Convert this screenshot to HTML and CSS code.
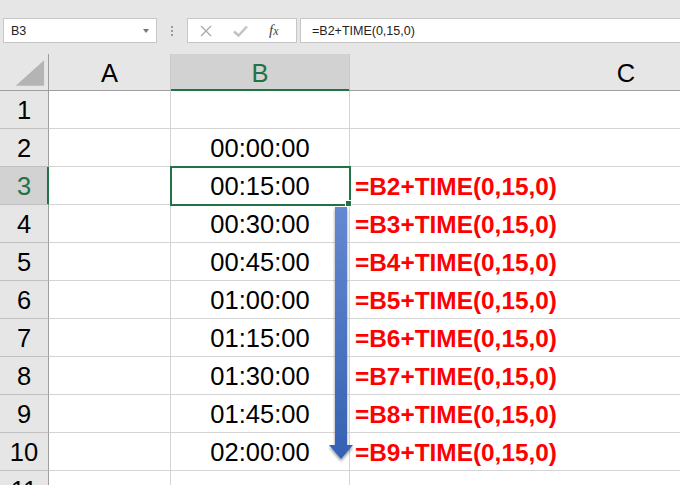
FILE: index.html
```html
<!DOCTYPE html>
<html>
<head>
<meta charset="utf-8">
<link rel="stylesheet" href="styles.css">
</head>
<body>
<div class="app">
  <div class="toolbar">
    <div class="namebox"><span class="ref">B3</span><span class="caret"></span></div>
    <div class="grip"><i></i><i></i><i></i></div>
    <div class="fxbox">
      <svg class="ico" width="14" height="14" viewBox="0 0 14 14"><path d="M2 2 L12 12 M12 2 L2 12" stroke="#a8a8a8" stroke-width="1.3" fill="none"/></svg>
      <svg class="ico" width="17" height="14" viewBox="0 0 17 14"><path d="M2 7.5 L6.5 11.5 L15 2.5" stroke="#c2c2c2" stroke-width="2.4" fill="none"/></svg>
      <span class="fx">f<span class="fxx">x</span></span>
    </div>
    <div class="formula">=B2+TIME(0,15,0)</div>
  </div>
  <div class="grid">
    <div class="hd corner"><svg width="49" height="36" viewBox="0 0 49 36"><polygon points="45,6 45,32 16,32" fill="#b4b4b4"/></svg></div>
    <div class="hd col">A</div>
    <div class="hd col sel">B</div>
    <div class="hd col">C</div>

    <div class="hd row">1</div><div class="c"></div><div class="c"></div><div class="c"></div>
    <div class="hd row">2</div><div class="c"></div><div class="c t">00:00:00</div><div class="c"></div>
    <div class="hd row sel">3</div><div class="c"></div><div class="c t active">00:15:00</div><div class="c f">=B2+TIME(0,15,0)</div>
    <div class="hd row">4</div><div class="c"></div><div class="c t">00:30:00</div><div class="c f">=B3+TIME(0,15,0)</div>
    <div class="hd row">5</div><div class="c"></div><div class="c t">00:45:00</div><div class="c f">=B4+TIME(0,15,0)</div>
    <div class="hd row">6</div><div class="c"></div><div class="c t">01:00:00</div><div class="c f">=B5+TIME(0,15,0)</div>
    <div class="hd row">7</div><div class="c"></div><div class="c t">01:15:00</div><div class="c f">=B6+TIME(0,15,0)</div>
    <div class="hd row">8</div><div class="c"></div><div class="c t">01:30:00</div><div class="c f">=B7+TIME(0,15,0)</div>
    <div class="hd row">9</div><div class="c"></div><div class="c t">01:45:00</div><div class="c f">=B8+TIME(0,15,0)</div>
    <div class="hd row">10</div><div class="c"></div><div class="c t">02:00:00</div><div class="c f">=B9+TIME(0,15,0)</div>
    <div class="hd row">11</div><div class="c"></div><div class="c"></div><div class="c"></div>
  </div>
  <svg class="arrow" width="680" height="485" viewBox="0 0 680 485">
    <defs>
      <linearGradient id="ag" x1="0" y1="0" x2="0" y2="1">
        <stop offset="0" stop-color="#6588d0"/>
        <stop offset="1" stop-color="#3561b3"/>
      </linearGradient>
      <filter id="sh" x="-1" y="-0.1" width="3" height="1.2">
        <feGaussianBlur in="SourceAlpha" stdDeviation="1.6"/>
        <feOffset dx="0" dy="1.5" result="b"/>
        <feComponentTransfer><feFuncA type="linear" slope="0.45"/></feComponentTransfer>
        <feMerge><feMergeNode/><feMergeNode in="SourceGraphic"/></feMerge>
      </filter>
    </defs>
    <path d="M335 207 H347 V445 H353 L341 459 L329 445 H335 Z" fill="url(#ag)" filter="url(#sh)"/>
  </svg>
</div>
</body>
</html>
```

FILE: styles.css
```css
html, body {
  margin: 0;
  padding: 0;
  background: #ffffff;
}

.app {
  position: relative;
  width: 680px;
  height: 485px;
  overflow: hidden;
  font-family: "Liberation Sans", Arial, sans-serif;
}

.toolbar {
  height: 54px;
  box-sizing: border-box;
  padding-top: 18px;
  background: #e6e6e6;
  display: flex;
  align-items: flex-start;
}

.namebox {
  margin-left: 3px;
  width: 154px;
  height: 25px;
  box-sizing: border-box;
  border: 1px solid #c6c6c6;
  background: #ffffff;
  display: flex;
  align-items: center;
  justify-content: space-between;
  padding: 0 7px 0 7px;
  font-size: 12.5px;
  color: #222222;
}

.caret {
  width: 0;
  height: 0;
  border-left: 3.5px solid transparent;
  border-right: 3.5px solid transparent;
  border-top: 4px solid #777777;
  margin-top: 1px;
}

.grip {
  width: 30px;
  height: 25px;
  display: flex;
  flex-direction: column;
  align-items: center;
  justify-content: center;
  gap: 2px;
}

.grip i {
  display: block;
  width: 2px;
  height: 2px;
  background: #9a9a9a;
}

.fxbox {
  width: 110px;
  height: 25px;
  box-sizing: border-box;
  border: 1px solid #c6c6c6;
  background: #ffffff;
  display: flex;
  align-items: center;
  padding-left: 11px;
  gap: 19px;
}

.fx {
  font-family: "Liberation Serif", "Times New Roman", serif;
  font-style: italic;
  font-size: 15px;
  color: #444444;
  margin-left: 1px;
}

.fxx {
  font-size: 12px;
}

.formula {
  margin-left: 3px;
  flex: 1;
  height: 25px;
  box-sizing: border-box;
  border: 1px solid #c6c6c6;
  border-right: none;
  background: #ffffff;
  display: flex;
  align-items: center;
  padding-left: 11px;
  font-size: 12.5px;
  color: #222222;
}

.grid {
  display: grid;
  grid-template-columns: 49px 122px 179px 553px;
  grid-template-rows: 37px;
  grid-auto-rows: 38px;
  width: 903px;
}

.grid > div {
  box-sizing: border-box;
  border-right: 1px solid #d4d4d4;
  border-bottom: 1px solid #d4d4d4;
  display: flex;
  align-items: center;
  font-size: 25.5px;
  color: #000000;
  padding-top: 2px;
}

.hd {
  background: #e6e6e6;
  justify-content: center;
}

.grid > .col {
  border-right-color: #c8c8c8;
  border-bottom-color: #9e9e9e;
}

.grid > .corner {
  border-right-color: #9e9e9e;
  border-bottom-color: #9e9e9e;
  padding: 0;
}

.corner svg {
  display: block;
}

.grid > .row {
  border-right-color: #9e9e9e;
  border-bottom-color: #c0c0c0;
}

.grid > .col.sel {
  background: #d2d2d2;
  color: #217346;
  border-bottom-color: #217346;
  box-shadow: inset 0 -1px 0 #217346;
}

.grid > .row.sel {
  background: #d2d2d2;
  color: #217346;
  border-right-color: #217346;
  box-shadow: inset -1px 0 0 #217346;
}

.t {
  justify-content: center;
}

.grid > .f {
  color: #ff0000;
  font-weight: bold;
  font-size: 24.4px;
  padding-left: 5px;
}

.active {
  position: relative;
  outline: 2px solid #217346;
  outline-offset: -1px;
}

.active::after {
  content: "";
  position: absolute;
  right: -2px;
  bottom: -2px;
  width: 5px;
  height: 5px;
  background: #217346;
  box-shadow: 0 0 0 1px #ffffff;
}

.arrow {
  position: absolute;
  left: 0;
  top: 0;
  pointer-events: none;
}
```
